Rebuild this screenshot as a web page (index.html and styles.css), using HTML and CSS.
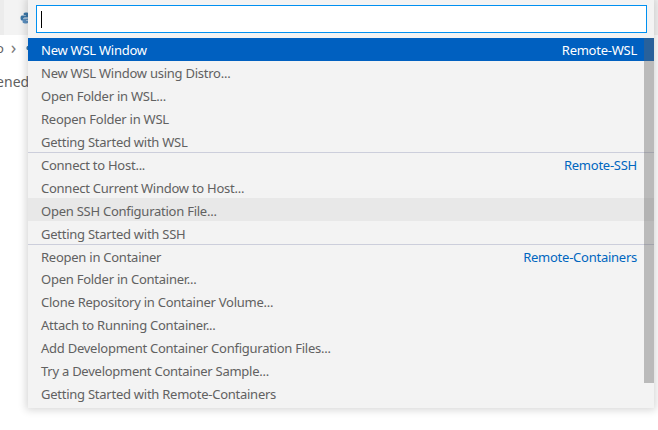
FILE: index.html
```html
<!DOCTYPE html>
<html lang="en">
<head>
<meta charset="utf-8">
<title>Remote Commands</title>
<link rel="stylesheet" href="styles.css">
</head>
<body>
<div class="workbench">
  <div class="tabbar">
    <div class="tab tab-prev"></div>
    <div class="tab tab-cur">
      <svg class="py-icon" width="12" height="12" viewBox="0 0 12 12"><path d="M5.8 0.5C3.6 0.5 3.7 1.5 3.7 1.5V3h2.2v0.5H2.4S0.5 3.3 0.5 5.9s1.7 2.5 1.7 2.5h1V7.2s-0.1-1.7 1.7-1.7h2.9s1.6 0 1.6-1.6V2.1S9.6 0.5 5.8 0.5z" fill="#3b77a8"/><path d="M6.2 11.5c2.2 0 2.1-1 2.1-1V9H6.1V8.5h3.5s1.9 0.2 1.9-2.4-1.7-2.5-1.7-2.5h-1v1.2s0.1 1.7-1.7 1.7H4.2S2.6 6.5 2.6 8.1v1.8s-0.2 1.6 3.6 1.6z" fill="#5b8fbf"/></svg>
    </div>
  </div>
  <div class="breadcrumbs">
    <span class="crumb">Demo</span>
    <span class="chev">&#x203A;</span>
    <svg class="py-icon small" width="10" height="10" viewBox="0 0 12 12"><path d="M5.8 0.5C3.6 0.5 3.7 1.5 3.7 1.5V3h2.2v0.5H2.4S0.5 3.3 0.5 5.9s1.7 2.5 1.7 2.5h1V7.2s-0.1-1.7 1.7-1.7h2.9s1.6 0 1.6-1.6V2.1S9.6 0.5 5.8 0.5z" fill="#3b77a8"/></svg>
  </div>
  <div class="editor-line">opened</div>
</div>

<div class="quick-input">
  <div class="input-row">
    <div class="input-box"><span class="caret"></span></div>
  </div>
  <div class="list">
    <div class="row selected"><span class="label">New WSL Window</span><span class="desc">Remote-WSL</span></div>
    <div class="row"><span class="label">New WSL Window using Distro...</span></div>
    <div class="row"><span class="label">Open Folder in WSL...</span></div>
    <div class="row"><span class="label">Reopen Folder in WSL</span></div>
    <div class="row"><span class="label">Getting Started with WSL</span></div>
    <div class="row sep"><span class="label">Connect to Host...</span><span class="desc">Remote-SSH</span></div>
    <div class="row"><span class="label">Connect Current Window to Host...</span></div>
    <div class="row hover"><span class="label">Open SSH Configuration File...</span></div>
    <div class="row"><span class="label">Getting Started with SSH</span></div>
    <div class="row sep"><span class="label">Reopen in Container</span><span class="desc">Remote-Containers</span></div>
    <div class="row"><span class="label">Open Folder in Container...</span></div>
    <div class="row"><span class="label">Clone Repository in Container Volume...</span></div>
    <div class="row"><span class="label">Attach to Running Container...</span></div>
    <div class="row"><span class="label">Add Development Container Configuration Files...</span></div>
    <div class="row"><span class="label">Try a Development Container Sample...</span></div>
    <div class="row"><span class="label">Getting Started with Remote-Containers</span></div>
    <div class="scrollbar"></div>
  </div>
</div>
</body>
</html>
```

FILE: styles.css
```css
* { box-sizing: border-box; }

html, body {
  margin: 0;
  padding: 0;
  background: #ffffff;
  width: 658px;
  height: 430px;
  overflow: hidden;
  font-family: "Segoe UI", "Noto Sans", "Open Sans", sans-serif;
  font-size: 13px;
}

.workbench {
  width: 658px;
  height: 430px;
  overflow: hidden;
}

.tabbar {
  height: 35px;
  background: #f3f3f3;
  display: flex;
}

.tab {
  height: 35px;
  background: #ececec;
}

.tab-prev {
  width: 5px;
  border-right: 1px solid #f3f3f3;
}

.tab-cur {
  width: 120px;
  display: flex;
  align-items: center;
  padding-left: 15px;
  background: #f3f3f3;
}

.breadcrumbs {
  height: 22px;
  display: flex;
  align-items: center;
  gap: 7px;
  margin-left: -33px;
  color: #616161;
  margin-top: 2px;
}

.chev {
  font-size: 18px;
  color: #7a7a7a;
  line-height: 1;
  margin-top: -2px;
}

.py-icon.small { margin-left: 3px; }

.editor-line {
  margin-top: 13px;
  margin-left: -21px;
  color: #616161;
  font-size: 14px;
}

.quick-input {
  position: absolute;
  left: 28px;
  top: 0;
  width: 626px;
  background: #f3f3f3;
  box-shadow: 0 0 8px 2px rgba(0, 0, 0, 0.16);
  padding: 5px 0 4px 0;
  color: #616161;
}

.input-row {
  padding: 0 7px 0 8px;
}

.input-box {
  height: 28px;
  background: #ffffff;
  border: 1px solid #0090f1;
  display: flex;
  align-items: center;
  padding-left: 4px;
}

.caret {
  width: 1px;
  height: 17px;
  background: #000000;
}

.list {
  position: relative;
  margin-top: 5px;
}

.row {
  height: 22.9px;
  display: flex;
  align-items: center;
  justify-content: space-between;
  padding: 2px 17px 0 13px;
  white-space: nowrap;
  letter-spacing: -0.25px;
}

.row.sep {
  border-top: 1px solid #cccedb;
}

.row.selected {
  background: #0060c0;
  color: #ffffff;
}

.row.hover {
  background: #e8e8e8;
}

.desc {
  color: #0066bf;
}

.row.selected .desc {
  color: #ffffff;
}

.scrollbar {
  position: absolute;
  right: 0;
  top: 0;
  width: 10px;
  height: 345px;
  background: rgba(100, 100, 100, 0.4);
}
```
